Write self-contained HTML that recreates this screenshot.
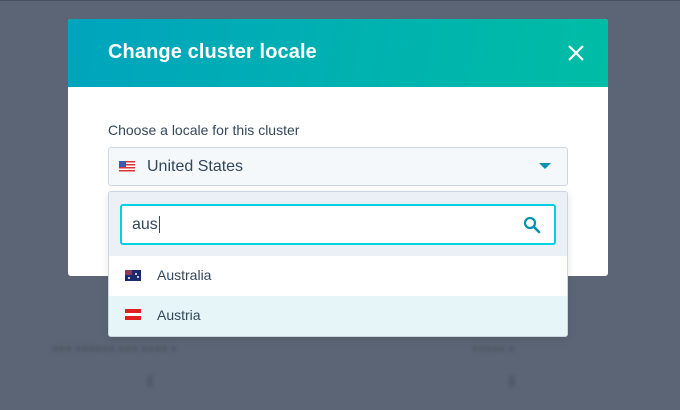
<!DOCTYPE html>
<html><head><style>
*{margin:0;padding:0;box-sizing:border-box}
body{width:680px;height:410px;background:#5b6575;font-family:"Liberation Sans",sans-serif;position:relative;overflow:hidden;box-shadow:inset 0 1px 0 #47505e}
.bgt{position:absolute;color:#515a68;font-size:11px;font-weight:bold;filter:blur(1.5px)}
.modal{position:absolute;left:68px;top:19px;width:540px;height:257px;background:#fff;border-radius:3px;overflow:hidden}
.hdr{height:68px;background:linear-gradient(100deg,#00a4bd,#00bda5);position:relative}
.hdr h1{position:absolute;left:40px;top:22px;color:#fff;font-size:20px;font-weight:bold;letter-spacing:0.1px}
.lbl{position:absolute;left:40px;top:103px;font-size:14px;color:#33475b}
.sel{position:absolute;left:108px;top:147px;width:460px;height:39px;background:#f5f8fa;border:1px solid #cbd6e2;border-radius:3px}
.sel span{position:absolute;left:38px;top:10px;font-size:16px;color:#33475b}
.caret{position:absolute;left:430px;top:15px;width:0;height:0;border-left:6px solid transparent;border-right:6px solid transparent;border-top:6px solid #0091ae}
.dd{position:absolute;left:108px;top:191px;width:460px;height:146px;background:#fff;border:1px solid #cbd6e2;border-radius:3px;overflow:hidden;box-shadow:0 2px 8px rgba(0,0,0,.1)}
.sr{height:64px;background:#eaf0f6;position:relative}
.inp{position:absolute;left:11px;top:12px;width:436px;height:41px;background:#fff;border:2px solid #00d0e4;border-radius:3px}
.inp span{position:absolute;left:10px;top:10px;font-size:16px;color:#33475b}
.row{height:40px;position:relative;font-size:14px;color:#33475b}
.row span{position:absolute;left:48px;top:11px}
.flag{position:absolute;left:16px;width:16px;height:11px}
</style></head><body>
<div class="bgt" style="left:52px;top:343px">■■■ ■■■■■■ ■■■ ■■■■ ■</div>
<div class="bgt" style="left:472px;top:343px">■■■■■ ■</div>
<div class="bgt" style="left:146px;top:372px;font-size:14px">▮</div>
<div class="bgt" style="left:508px;top:372px;font-size:14px">▮</div>
<div class="modal">
<div class="hdr"><h1>Change cluster locale</h1>
<svg style="position:absolute;left:499px;top:25px" width="18" height="18"><path d="M2 2L16 16M16 2L2 16" stroke="#fff" stroke-width="2.2"/></svg></div>
<div class="lbl">Choose a locale for this cluster</div>
</div>
<div class="sel">
<svg style="position:absolute;left:10px;top:13px" width="16" height="11"><rect width="16" height="11" fill="#fff"/><rect y="0" width="16" height="1.5" fill="#d33"/><rect y="3" width="16" height="1.5" fill="#d33"/><rect y="6" width="16" height="1.5" fill="#d33"/><rect y="9" width="16" height="1.5" fill="#d33"/><rect width="7" height="6" fill="#3b5bb5"/></svg>
<span>United States</span><div class="caret"></div></div>
<div class="dd">
<div class="sr"><div class="inp"><span>aus<span style="position:static;border-left:1px solid #33475b;margin-left:1px"></span></span>
<svg style="position:absolute;left:401px;top:10px" width="18" height="18"><circle cx="7" cy="7" r="5" fill="none" stroke="#0091ae" stroke-width="2.2"/><path d="M11 11L16 16" stroke="#0091ae" stroke-width="2.6" stroke-linecap="round"/></svg></div></div>
<div class="row"><svg class="flag" style="top:14px" width="16" height="11"><rect width="16" height="11" fill="#1a2a6c"/><rect width="7" height="5" fill="#8b3a5a"/><circle cx="11" cy="4" r="1" fill="#fff"/><circle cx="13" cy="7" r="1" fill="#fff"/><circle cx="4" cy="8" r="1" fill="#fff"/></svg><span>Australia</span></div>
<div class="row" style="background:#e5f5f8"><svg class="flag" style="top:13px" width="16" height="11"><rect width="16" height="11" fill="#e02020"/><rect y="4" width="16" height="3" fill="#fff"/></svg><span>Austria</span></div>
</div>
</body></html>
